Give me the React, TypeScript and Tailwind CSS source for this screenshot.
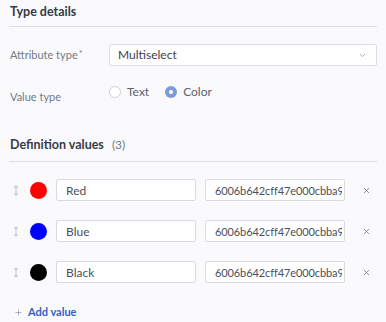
import { ChevronDown, X, Plus } from 'lucide-react';

const values = [
    { name: 'Red', color: '#ff0000' },
    { name: 'Blue', color: '#0000ff' },
    { name: 'Black', color: '#000000' },
];

function DragHandle() {
    return (
        <svg width="6" height="11" viewBox="0 0 6 11" className="text-[#b8bcc6]">
            <path d="M3 1v9M1 2.5L3 0.8 5 2.5M1 8.5L3 10.2 5 8.5" fill="none" stroke="currentColor" strokeWidth="1" />
        </svg>
    );
}

export default function App() {
    return (
        <div
            className="w-[386px] h-[322px] overflow-hidden bg-[#fafafc] px-[9px] text-[11px] text-[#333845]"
            style={{ fontFamily: 'Lato, "Open Sans", sans-serif' }}
        >
            {/* Type details */}
            <div className="pt-[3px] pb-[6px] pl-px border-b border-[#dcdee3]">
                <h2 className="text-[12.5px] font-bold leading-[17px] text-[#363b48]">Type details</h2>
            </div>

            <div className="flex items-center mt-[17px] h-[22px]">
                <span className="w-[100px] pl-px text-[#737985]">
                    Attribute type<span className="text-[9px] align-top ml-px">*</span>
                </span>
                <div className="flex-1 h-[22px] bg-white border border-[#dcdee3] rounded-[2px] flex items-center justify-between pl-[8px] pr-[9px]">
                    <span className="text-[12px] text-[#3a3f4b]">Multiselect</span>
                    <ChevronDown className="w-[9px] h-[9px] text-[#8a8f9a]" strokeWidth={2} />
                </div>
            </div>

            <div className="flex mt-[17px] h-[18px]">
                <span className="w-[100px] pl-px pt-[6px] text-[#737985]">Value type</span>
                <div className="flex items-start gap-[16px]">
                    <label className="flex items-center gap-[6px]">
                        <span className="w-[12px] h-[12px] rounded-full border border-[#cfd2d8] bg-white" />
                        <span className="text-[12px] text-[#5c616d]">Text</span>
                    </label>
                    <label className="flex items-center gap-[6px]">
                        <span className="w-[12px] h-[12px] rounded-full bg-[#7d9bd8] flex items-center justify-center">
                            <span className="w-[4px] h-[4px] rounded-full bg-white" />
                        </span>
                        <span className="text-[12px] text-[#5c616d]">Color</span>
                    </label>
                </div>
            </div>

            {/* Definition values */}
            <div className="mt-[35px] pb-[7px] pl-px border-b border-[#dcdee3] flex items-baseline gap-[8px]">
                <h2 className="text-[12.5px] font-bold leading-[17px] text-[#363b48]">Definition values</h2>
                <span className="text-[12px] text-[#737985]">(3)</span>
            </div>

            <div className="mt-[17px] flex flex-col gap-[19px]">
                {values.map((v) => (
                    <div key={v.name} className="flex items-center h-[22px]">
                        <div className="w-[21px] pl-[4px] flex items-center">
                            <DragHandle />
                        </div>
                        <span className="w-[17px] h-[17px] rounded-full" style={{ backgroundColor: v.color }} />
                        <input
                            readOnly
                            value={v.name}
                            className="ml-[9px] w-[140px] h-[22px] bg-white border border-[#d8dbe0] rounded-[2px] px-[9px] text-[12px] text-[#4a4f5b] outline-none"
                        />
                        <input
                            readOnly
                            value="6006b642cff47e000cbba9c1"
                            className="ml-[9px] w-[140px] h-[22px] bg-white border border-[#d8dbe0] rounded-[2px] pl-[9px] pr-[2px] text-[11px] tracking-[-0.1px] text-[#4a4f5b] outline-none"
                        />
                        <X className="ml-[17px] w-[9px] h-[9px] text-[#6b707c]" strokeWidth={2} />
                    </div>
                ))}
            </div>

            <button className="mt-[21px] flex items-center gap-[5px] pl-[5px] text-[#3360c4] font-bold">
                <Plus className="w-[9px] h-[9px] text-[#7b808b]" strokeWidth={1.5} />
                Add value
            </button>
        </div>
    );
}
